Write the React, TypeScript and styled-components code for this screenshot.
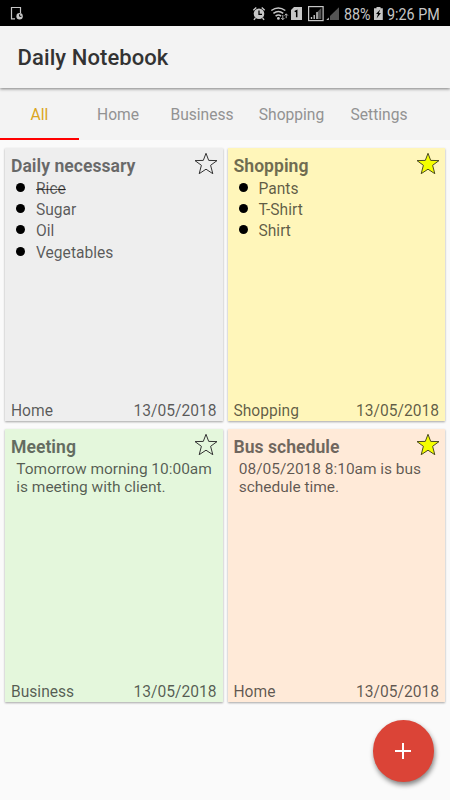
import React from "react";
import styled, { createGlobalStyle } from "styled-components";

const GlobalStyle = createGlobalStyle`
  *, *::before, *::after { box-sizing: border-box; }
  body { margin: 0; background: #fafafa; font-family: Roboto, "Liberation Sans", sans-serif; }
  h1, h2, p, ul { margin: 0; padding: 0; }
  button { font: inherit; border: 0; padding: 0; background: none; }
`;

const Screen = styled.div`
  width: 450px;
  height: 800px;
  overflow: hidden;
  display: flex;
  flex-direction: column;
  background: #fafafa;
`;

const StatusBar = styled.div`
  height: 26px;
  flex: none;
  display: flex;
  align-items: center;
  justify-content: space-between;
  padding: 0 0 0 10px;
  background: #000;
  color: #c6c6c6;
`;

const StatusRight = styled.div`
  display: flex;
  align-items: center;
  height: 26px;
  width: 198px;
`;

const StatusIcons = styled.svg`
  display: block;
  flex: none;
`;

const StatusText = styled.span<{ $width: number }>`
  width: ${(p) => p.$width}px;
  flex: none;
  font-size: 16.6px;
  line-height: 26px;
  padding-top: 3px;
  white-space: nowrap;
  transform: scaleX(0.862);
  transform-origin: left center;
`;

const Header = styled.header`
  position: relative;
  z-index: 1;
  height: 62px;
  flex: none;
  padding-left: 17.6px;
  background: #f3f3f3;
  box-shadow: 0 1px 3px rgba(0, 0, 0, 0.48);
`;

const AppTitle = styled.h1`
  font-size: 22px;
  font-weight: 500;
  line-height: 64px;
  letter-spacing: 0.08px;
  color: #333;
`;

const Tabs = styled.nav`
  height: 52px;
  flex: none;
  display: flex;
  background: #f3f3f3;
`;

const Tab = styled.button<{ $width: number; $active?: boolean }>`
  width: ${(p) => p.$width}px;
  height: 52px;
  padding-top: 2px;
  font-size: 15.6px;
  line-height: 50px;
  color: ${(p) => (p.$active ? "#dba520" : "#929292")};
  border-bottom: 2px solid ${(p) => (p.$active ? "#ff0000" : "transparent")};
`;

const NoteGrid = styled.main`
  display: grid;
  grid-template-columns: 217.5px 217.5px;
  grid-template-rows: 273.5px 273.5px;
  gap: 7.5px 5px;
  padding: 7.5px 5px;
`;

const Note = styled.article<{ $color: string }>`
  display: flex;
  flex-direction: column;
  padding: 0 6px;
  background: ${(p) => p.$color};
  box-shadow: 0 1px 2px rgba(0, 0, 0, 0.34);
  color: rgba(0, 0, 0, 0.64);
  font-size: 15.6px;
`;

const NoteHead = styled.div`
  display: flex;
  justify-content: space-between;
  height: 29px;
`;

const NoteTitle = styled.h2`
  font-size: 17.6px;
  font-weight: 700;
  line-height: 37px;
  color: rgba(0, 0, 0, 0.56);
`;

const Star = styled.svg`
  display: block;
  margin: 4.5px -1px 0 0;
`;

const NoteBody = styled.div`
  flex: 1;
`;

const Items = styled.ul`
  list-style: none;
  padding-top: 0.5px;
`;

const Item = styled.li<{ $done?: boolean }>`
  display: flex;
  align-items: center;
  height: 21.3px;
  padding-left: 5px;
  line-height: 21px;

  &::before {
    content: "";
    width: 9px;
    height: 9px;
    margin: -1px 11px 0 0;
    border-radius: 50%;
    background: #000;
  }

  span {
    padding-top: 3px;
    text-decoration: ${(p) => (p.$done ? "line-through" : "none")};
  }
`;

const Paragraph = styled.p`
  padding: 2.5px 0 0 5.3px;
  font-size: 15.5px;
  line-height: 18px;
  letter-spacing: -0.03px;
  white-space: pre;
`;

const NoteFoot = styled.div`
  display: flex;
  justify-content: space-between;
  height: 21px;
  line-height: 23px;
`;

const AddButton = styled.button`
  position: absolute;
  left: 372.5px;
  top: 720px;
  width: 61.5px;
  height: 61.5px;
  border-radius: 50%;
  background: #db4437;
  box-shadow: 1px 3px 5px rgba(0, 0, 0, 0.48);
  display: flex;
  align-items: center;
  justify-content: center;
`;

type NoteData = {
  title: string;
  color: string;
  starred: boolean;
  category: string;
  items?: { label: string; done?: boolean }[];
  text?: string;
};

const notes: NoteData[] = [
  {
    title: "Daily necessary",
    color: "#eeeeee",
    starred: false,
    category: "Home",
    items: [{ label: "Rice", done: true }, { label: "Sugar" }, { label: "Oil" }, { label: "Vegetables" }],
  },
  {
    title: "Shopping",
    color: "#fff6ba",
    starred: true,
    category: "Shopping",
    items: [{ label: "Pants" }, { label: "T-Shirt" }, { label: "Shirt" }],
  },
  {
    title: "Meeting",
    color: "#e4f7dc",
    starred: false,
    category: "Business",
    text: "Tomorrow morning 10:00am\nis meeting with client.",
  },
  {
    title: "Bus schedule",
    color: "#ffead8",
    starred: true,
    category: "Home",
    text: "08/05/2018 8:10am is bus\nschedule time.",
  },
];

const tabs = [
  { label: "All", width: 79 },
  { label: "Home", width: 78 },
  { label: "Business", width: 90 },
  { label: "Shopping", width: 89 },
  { label: "Settings", width: 86 },
];

const NotificationIcon = () => (
  <StatusIcons width="14" height="14" viewBox="0 0 14 14" fill="none">
    <path d="M5 12.9H1.5V1.5h9V7" stroke="#c6c6c6" strokeWidth="1.2" />
    <circle cx="9.6" cy="10.2" r="3.2" fill="#c6c6c6" />
    <path d="M9.6 8.3v2h1.8" stroke="#000" />
  </StatusIcons>
);

const SystemIcons = () => (
  <StatusIcons width="92" height="26" viewBox="252 0 92 26" fill="none" stroke="#c6c6c6">
    <circle cx="259" cy="13.8" r="5.3" fill="#c6c6c6" stroke="none" />
    <path d="M253.3 10.2l3-2.7M264.7 10.2l-3-2.7M255.4 18l-1.5 1.9M262.6 18l1.5 1.9" strokeWidth="1.4" />
    <path d="M259 10.5v3.8h3" stroke="#000" strokeWidth="1.3" />
    <path d="M271.3 10.5q7-5.2 14 0M273.4 13.4q5-4 9.8 0M275.6 16.2q2.8-2.2 5.5 0" strokeWidth="1.5" />
    <circle cx="278.4" cy="18.4" r="1.4" fill="#c6c6c6" stroke="none" />
    <path d="M282.8 15v4.5m-1.6-1.5l1.6 1.7 1.6-1.7M286.2 18.2V14m-1.6 1.5l1.6-1.7 1.6 1.7" strokeWidth=".9" />
    <path d="M294 7h8v13h-11V10z" fill="#c6c6c6" stroke="none" />
    <path d="M294.7 11.6l2-1v6.6" stroke="#000" strokeWidth="1.5" />
    <rect x="308.6" y="6.6" width="14.5" height="14" strokeWidth="1.2" />
    <path d="M321.3 8v11h-5v-6z" fill="#555" stroke="none" />
    <path d="M311.5 17v2M314.2 15v4M317 12v7" strokeWidth="1.4" />
    <path d="M339 7.3V20h-9v-4z" fill="#555" stroke="none" />
    <path d="M328.8 17.5V20h-2.5z" fill="#c6c6c6" stroke="none" />
  </StatusIcons>
);

const BatteryIcon = () => (
  <StatusIcons width="14" height="26" viewBox="373 0 14 26" fill="#c6c6c6">
    <path d="M374 8.3h2.5V7h4v1.3h2.3V20H374z" />
    <path d="M380.2 9.4l-4.2 4.7h2l-1.4 4.4 4.3-5.5h-2z" fill="#000" />
  </StatusIcons>
);

const StarIcon = ({ filled }: { filled: boolean }) => (
  <Star width="24" height="24" viewBox="0 0 24 24">
    <path
      d="M12 1.3l2.7 7.1 8.3.2-6.4 4.7 2.2 8.4-6.8-4.5-6.8 4.5 2.2-8.4L1 8.6l8.3-.2z"
      fill={filled ? "#f5ff00" : "none"}
      stroke={filled ? "#4c4c20" : "#333"}
      strokeWidth="1"
    />
  </Star>
);

export default function App() {
  return (
    <Screen>
      <GlobalStyle />
      <StatusBar>
        <NotificationIcon />
        <StatusRight>
          <SystemIcons />
          <StatusText $width={29}>88%</StatusText>
          <BatteryIcon />
          <StatusText $width={60}>9:26 PM</StatusText>
        </StatusRight>
      </StatusBar>
      <Header>
        <AppTitle>Daily Notebook</AppTitle>
      </Header>
      <Tabs>
        {tabs.map((tab, i) => (
          <Tab key={tab.label} $width={tab.width} $active={i === 0}>
            {tab.label}
          </Tab>
        ))}
      </Tabs>
      <NoteGrid>
        {notes.map((note) => (
          <Note key={note.title} $color={note.color}>
            <NoteHead>
              <NoteTitle>{note.title}</NoteTitle>
              <StarIcon filled={note.starred} />
            </NoteHead>
            <NoteBody>
              {note.items && (
                <Items>
                  {note.items.map((item) => (
                    <Item key={item.label} $done={item.done}>
                      <span>{item.label}</span>
                    </Item>
                  ))}
                </Items>
              )}
              {note.text && <Paragraph>{note.text}</Paragraph>}
            </NoteBody>
            <NoteFoot>
              <span>{note.category}</span>
              <span>13/05/2018</span>
            </NoteFoot>
          </Note>
        ))}
      </NoteGrid>
      <AddButton aria-label="Add note">
        <svg width="18" height="18" viewBox="0 0 18 18" stroke="#fff" strokeWidth="2">
          <path d="M9 1v16M1 9h16" />
        </svg>
      </AddButton>
    </Screen>
  );
}
